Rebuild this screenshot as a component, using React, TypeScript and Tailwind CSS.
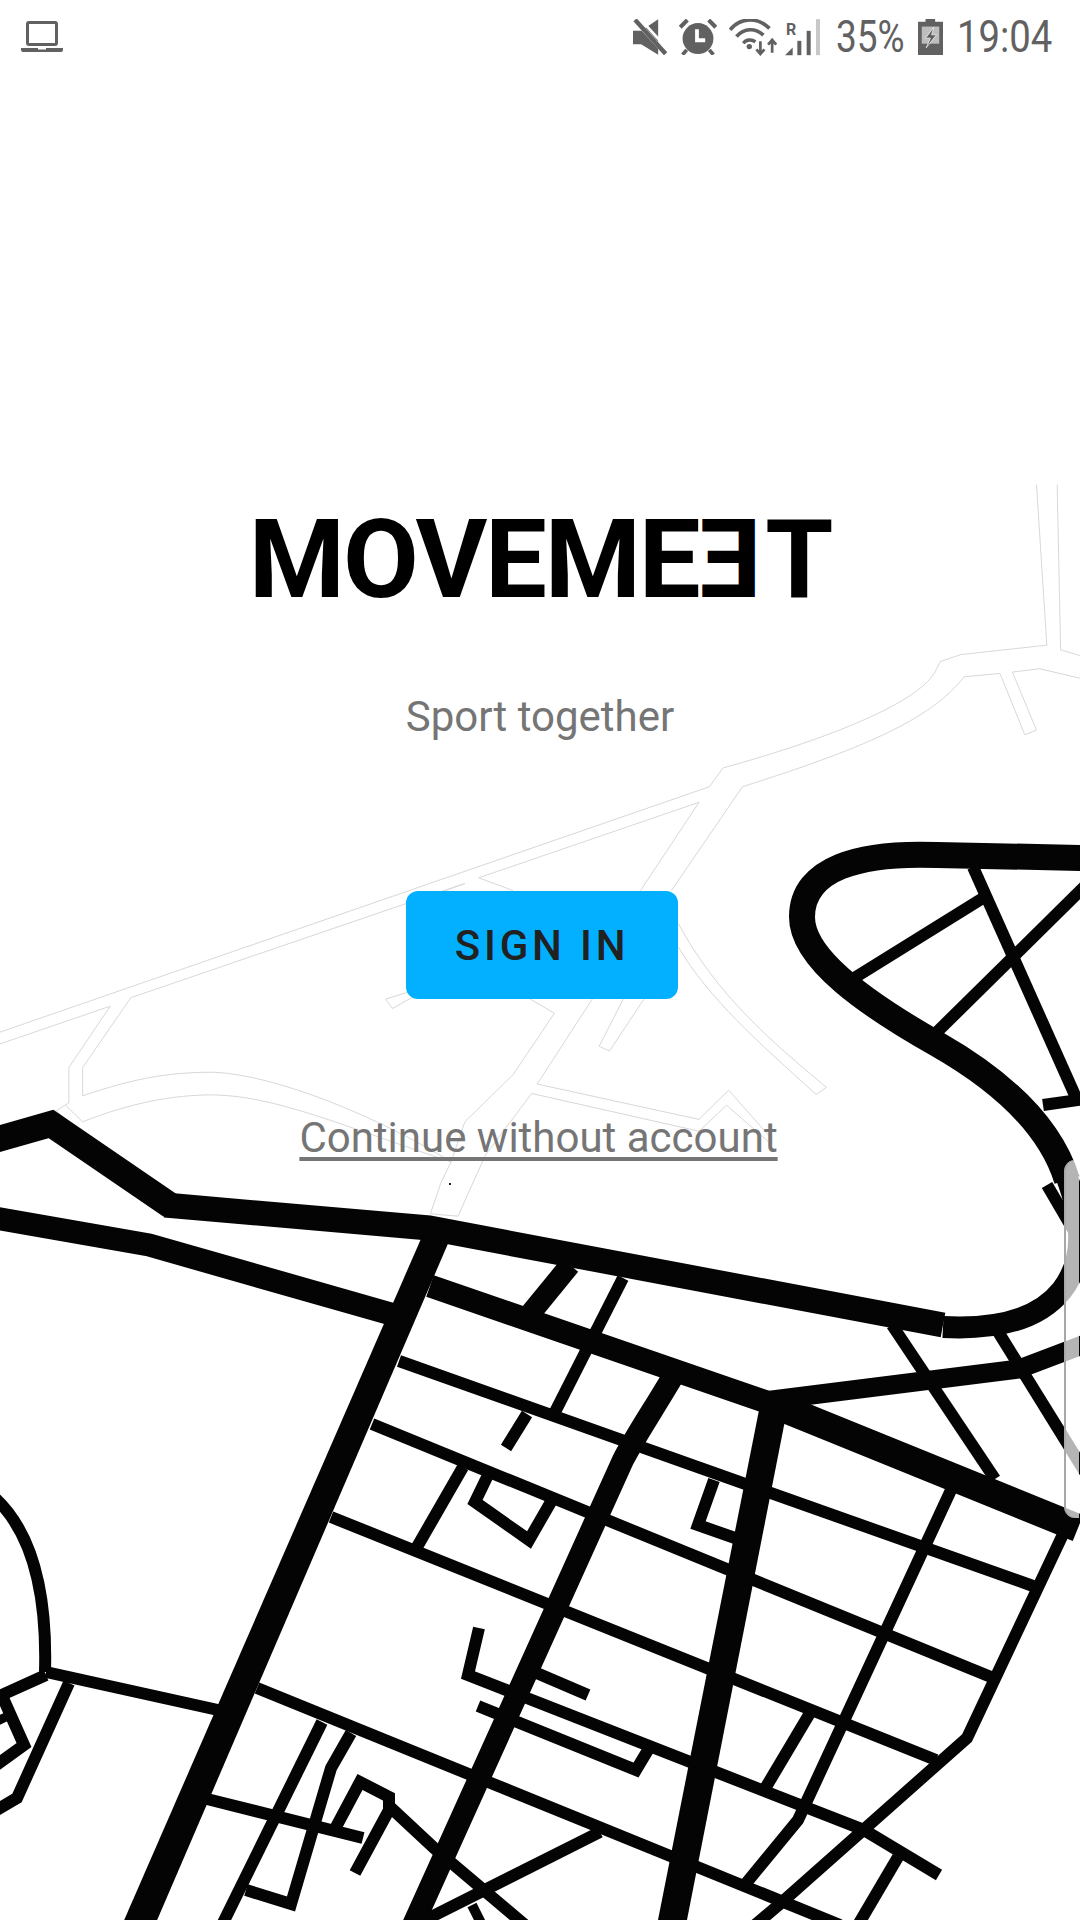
const roads: { w: number; d: string }[] = [
  // main roads
  { w: 26, d: "M1085 858 L937 855 C860 852 802 868 802 917 C802 960 870 1006 937 1044 C1000 1080 1050 1125 1067 1180" },
  { w: 22, d: "M1062 1165 C1085 1220 1085 1260 1062 1290 C1040 1318 1000 1330 943 1327" },
  { w: 26, d: "M-5 1140 L51 1124 L171 1206" },
  { w: 25, d: "M165 1205 L429 1228 L943 1325" },
  { w: 23, d: "M-5 1218 L149 1245 L398 1316" },
  { w: 23, d: "M430 1286 L784 1408" },
  { w: 28, d: "M770 1403 L1078 1528" },
  { w: 19, d: "M764 1401 L1019 1369 L1085 1344" },
  { w: 21, d: "M570 1265 L530 1314" },
  { w: 22, d: "M672 1378 C650 1415 636 1435 623 1460 L413 1925" },
  // streets
  { w: 12, d: "M973 867 L1078 1102" },
  { w: 12, d: "M851 980 L983 898" },
  { w: 12, d: "M937 1032 L1085 886" },
  { w: 12, d: "M1043 1105 L1085 1099" },
  { w: 12, d: "M1047 1185 L1085 1250" },
  { w: 12, d: "M623 1278 L554 1414" },
  { w: 12, d: "M527 1414 L506 1448" },
  { w: 12, d: "M399 1361 L1033 1586" },
  { w: 12, d: "M372 1424 L991 1677" },
  { w: 12, d: "M331 1517 L936 1760" },
  { w: 12, d: "M257 1688 L840 1925" },
  { w: 12, d: "M479 1628 L468 1675 L864 1830 L939 1875" },
  { w: 12, d: "M478 1706 L636 1770 L648 1750" },
  { w: 12, d: "M525 1668 L588 1695" },
  { w: 12, d: "M714 1480 L698 1525 L735 1538" },
  { w: 12, d: "M489 1473 L475 1502 L529 1540 L552 1500" },
  { w: 12, d: "M463 1467 L417 1547" },
  { w: 12, d: "M-5 1498 C35 1535 47 1600 45 1672" },
  { w: 12, d: "M46 1672 L218 1710" },
  { w: 12, d: "M46 1675 L-5 1698" },
  { w: 12, d: "M69 1683 L17 1798 L-5 1811" },
  { w: 12, d: "M3 1698 L24 1745 L-5 1766" },
  { w: 9, d: "M-5 1722 L8 1716" },
  { w: 12, d: "M207 1799 L363 1838" },
  { w: 12, d: "M322 1722 L222 1925" },
  { w: 12, d: "M351 1733 L331 1768 L291 1904 L246 1890" },
  { w: 12, d: "M336 1827 L360 1782 L389 1797 L389 1810 L355 1873" },
  { w: 12, d: "M389 1806 L434 1848 L525 1925" },
  { w: 12, d: "M600 1832 L415 1925" },
  { w: 10, d: "M472 1905 L482 1925" },
  { w: 12, d: "M951 1490 L798 1820 L743 1887" },
  { w: 12, d: "M810 1713 L766 1787" },
  { w: 12, d: "M1065 1530 L967 1738 L781 1903 L755 1925" },
  { w: 12, d: "M898 1857 L858 1925" },
  { w: 12, d: "M892 1325 L995 1479" },
  { w: 12, d: "M997 1330 L1085 1472" },
];

// faint footpaths, traced in the coordinates of the upper map area
const paths = [
  "M1505 10 L1520 350 L1395 370 L1365 385 L1360 400 C1340 470 1200 550 1050 610 L1030 650 L0 1170",
  "M1535 10 L1540 360 L1568 372",
  "M1568 420 L1510 400 L1470 407 L1505 530 L1488 540 L1452 410 L1400 417 C1350 510 1250 570 1078 650 L975 870",
  "M1015 683 L930 870",
  "M1015 683 L695 843 L745 870",
  "M675 855 L190 1097 L120 1245 L120 1305 C200 1265 250 1255 310 1255 C400 1260 550 1350 655 1445 L640 1490 L625 1555 L665 1560",
  "M0 1195 L160 1115 L100 1245 L100 1320 L78 1340",
  "M675 855 L600 895",
  "M600 1095 L570 1120 L560 1100 L600 1082",
  "M770 1100 L805 1130 L745 1260 L675 1360 L655 1445",
  "M860 1100 L780 1280 L1015 1355 L1058 1293 L1118 1392",
  "M772 1300 L1015 1380 L1055 1325 L1118 1405",
  "M772 1300 L705 1430 L665 1560",
  "M905 1100 L870 1200 L885 1210 L935 1100",
  "M985 990 C1030 1100 1100 1190 1185 1302 L1200 1287 C1120 1190 1040 1090 985 940",
  "M120 1360 C190 1320 250 1303 310 1303 C400 1305 500 1370 655 1445",
  "M80 1335 L105 1365 M95 1325 L120 1360",
];

function MapBackground() {
  return (
    <svg className="absolute inset-0" width="1080" height="1920" viewBox="0 0 1080 1920">
      <g transform="translate(0 480) scale(0.6887 0.4719)" fill="none" stroke="#d8d8d8" strokeWidth="1">
        {paths.map((d) => (
          <path key={d} d={d} vectorEffect="non-scaling-stroke" />
        ))}
      </g>
      {roads.map((r) => (
        <path key={r.d} d={r.d} fill="none" stroke="#040404" strokeWidth={r.w} />
      ))}
      <polygon points="427,1225 456,1225 155,1925 122,1925" fill="#040404" />
      <polygon points="762,1395 790,1395 686,1925 657,1925" fill="#040404" />
      <rect x="449" y="1183" width="2" height="2" fill="#222" />
    </svg>
  );
}

function StatusIcons() {
  return (
    <div className="flex items-center">
      {/* muted speaker */}
      <svg width="34" height="36" viewBox="0 0 100 105" className="mr-[12px]">
        <path d="M0 34 H24 L74 0 V105 L24 74 H0 Z" fill="#616161" />
        <path d="M0 -4 L90 94" stroke="#fff" strokeWidth="14" />
        <path d="M6 2 L96 102" stroke="#616161" strokeWidth="13" />
        <path d="M16 -6 L106 92" stroke="#fff" strokeWidth="8" />
      </svg>
      {/* alarm */}
      <svg width="38" height="36" viewBox="0 0 110 105" className="mr-[12px]">
        <circle cx="55" cy="57" r="45" fill="#616161" />
        <path d="M3 24 L24 3 M107 24 L86 3" stroke="#616161" strokeWidth="12" />
        <path d="M22 90 L10 104 M88 90 L100 104" stroke="#616161" strokeWidth="11" />
        <path d="M52 30 V62 H76" stroke="#fff" strokeWidth="11" fill="none" />
      </svg>
      {/* wifi with data arrows */}
      <svg width="49" height="37" viewBox="0 0 145 110" className="mr-[7px]">
        <path d="M3 32 C35 -6 85 -6 120 28" stroke="#616161" strokeWidth="11" fill="none" />
        <path d="M22 52 C45 26 78 26 102 48" stroke="#616161" strokeWidth="11" fill="none" />
        <path d="M42 72 C52 60 68 60 78 68" stroke="#616161" strokeWidth="10" fill="none" />
        <circle cx="60" cy="82" r="8" fill="#616161" />
        <path d="M93 66 V104 M81 90 L93 104 L105 90" stroke="#616161" strokeWidth="8" fill="none" />
        <path d="M128 100 V62 M116 76 L128 62 L140 76" stroke="#616161" strokeWidth="8" fill="none" />
      </svg>
      {/* roaming signal */}
      <div className="relative w-[35px] h-[37px] mr-[16px]">
        <span className="absolute left-[1px] top-[3px] text-[16px] leading-[16px] font-bold text-[#616161]">R</span>
        <svg className="absolute inset-0" width="35" height="37" viewBox="0 0 105 110">
          <polygon points="0,108 23,85 23,108" fill="#616161" />
          <rect x="37" y="65" width="12" height="43" fill="#616161" />
          <rect x="65" y="35" width="12" height="73" fill="#616161" />
          <rect x="93" y="0" width="12" height="108" fill="#c8c8c8" />
        </svg>
      </div>
      <span className="inline-block w-[69px] text-[44px] leading-none text-[#616161] whitespace-nowrap mr-[13px] origin-left scale-x-[.84]">35%</span>
      {/* charging battery */}
      <svg width="25" height="36" viewBox="0 0 73 105" className="mr-[14px]">
        <path d="M22 0 H50 V8 H73 V105 H0 V8 H22 Z" fill="#616161" />
        <rect x="11" y="22" width="51" height="50" fill="#bdbdbd" />
        <path d="M46 24 L22 56 H36 L24 84 L54 46 H40 Z" fill="#616161" stroke="#fff" strokeWidth="2" />
      </svg>
      <span className="inline-block w-[95px] text-[44px] leading-none text-[#616161] whitespace-nowrap origin-left scale-x-[.87]">19:04</span>
    </div>
  );
}

export default function App() {
  return (
    <div className="relative w-[1080px] h-[1920px] overflow-hidden bg-white font-[Roboto,sans-serif]">
      <MapBackground />

      <div className="relative flex flex-col items-center">
        <div className="w-full h-[74px] flex items-center justify-between pl-[21px] pr-[28px]">
          <svg width="42" height="32" viewBox="0 0 42 32">
            <rect x="6.5" y="1.5" width="29" height="22" rx="1.5" fill="none" stroke="#616161" strokeWidth="3" />
            <path d="M0 27 H17 V28.5 H25 V27 H42 V29 A2 2 0 0 1 40 31 H2 A2 2 0 0 1 0 29 Z" fill="#616161" />
          </svg>
          <StatusIcons />
        </div>

        <h1 className="mt-[431px] h-[110px] flex items-center text-[110px] leading-none font-bold text-black tracking-[-2.2px]">
          MOVEME<span className="inline-block -scale-x-100 ml-[3px] mr-[4px]">E</span>T
        </h1>

        <p className="mt-[78px] text-[42px] leading-[48px] text-[#757575]">Sport together</p>

        <button className="mt-[150px] ml-[4px] w-[272px] h-[108px] rounded-[12px] bg-[#03b0ff] text-[42px] font-medium tracking-[3.8px] text-[#212121]">
          SIGN IN
        </button>

        <a className="mt-[115px] mr-[3px] text-[42px] leading-[48px] text-[#757575] underline underline-offset-[5px]">
          Continue without account
        </a>
      </div>

      <div className="absolute right-[1px] top-[1160px] w-[15px] h-[358px] rounded-l-[11px] bg-white/70 border-l-2 border-[#a8a8a8]" />
    </div>
  );
}
